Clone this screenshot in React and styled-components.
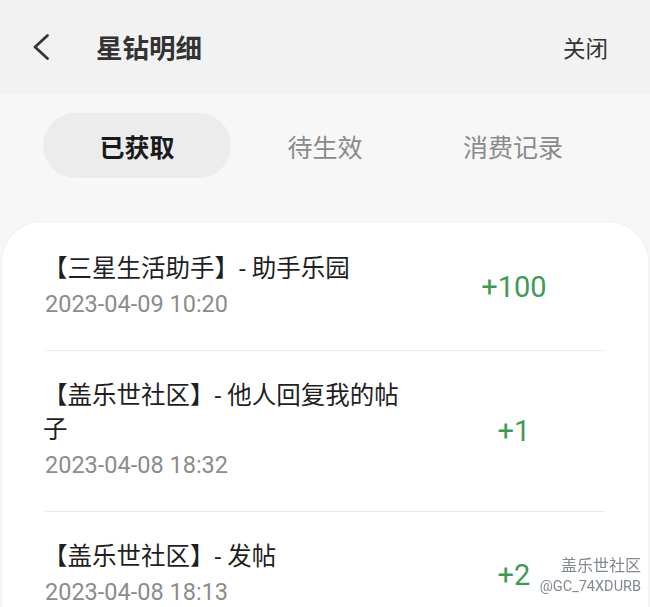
import React from 'react';
import styled, { createGlobalStyle } from 'styled-components';

const records = [
  { id: 1, title: '【三星生活助手】- 助手乐园', time: '2023-04-09 10:20', amount: '+100' },
  { id: 2, title: '【盖乐世社区】- 他人回复我的帖子', time: '2023-04-08 18:32', amount: '+1' },
  { id: 3, title: '【盖乐世社区】- 发帖', time: '2023-04-08 18:13', amount: '+2' },
];

const tabs = ['已获取', '待生效', '消费记录'];

const App = () => {
  return (
    <>
      <GlobalStyle />
      <Page>
        <Header>
          <Back aria-label="返回">
            <svg width="16" height="26" viewBox="0 0 16 26">
              <polyline
                points="14.5,1.5 2,13 14.5,24.5"
                fill="none"
                stroke="#333"
                strokeWidth="2.7"
                strokeLinecap="round"
                strokeLinejoin="round"
              />
            </svg>
          </Back>
          <Title>星钻明细</Title>
          <Close>关闭</Close>
        </Header>
        <Tabs>
          {tabs.map((t, i) => (
            <Tab key={t} active={i === 0}>
              {t}
            </Tab>
          ))}
        </Tabs>
        <Card>
          {records.map(item => (
            <Row key={item.id}>
              <Info>
                <RowTitle>{item.title}</RowTitle>
                <Time>{item.time}</Time>
              </Info>
              <Amount>{item.amount}</Amount>
            </Row>
          ))}
        </Card>
      </Page>
      <Watermark>
        <span>盖乐世社区</span>
        <small>@GC_74XDURB</small>
      </Watermark>
    </>
  );
};

export default App;

const GlobalStyle = createGlobalStyle`
  html, body {
    margin: 0;
    padding: 0;
    background: #f7f7f7;
    overflow: hidden;
  }
  body {
    font-family: Roboto, "Noto Sans CJK SC", sans-serif;
  }
`;

const Page = styled.div`
  min-height: 100vh;
  display: flex;
  flex-direction: column;
`;

const Header = styled.div`
  height: 95px;
  background: #f2f2f2;
  display: flex;
  align-items: center;
  padding: 0 42px 0 33px;
  box-sizing: border-box;
`;

const Back = styled.div`
  display: flex;
  width: 16px;
  height: 26px;
  margin-top: -1px;
`;

const Title = styled.h1`
  margin: 3px 0 0 47px;
  flex: 1;
  font-size: 26.5px;
  font-weight: 700;
  color: #333;
  line-height: 1;
`;

const Close = styled.span`
  font-size: 22.5px;
  font-weight: 400;
  color: #333;
  margin-top: -2px;
`;

const Tabs = styled.div`
  display: grid;
  grid-template-columns: repeat(3, 188px);
  margin: 18px 0 0 43px;
`;

const Tab = styled.div`
  height: 65px;
  border-radius: 33px;
  display: flex;
  align-items: center;
  justify-content: center;
  font-size: 25px;
  font-weight: ${p => (p.active ? 700 : 400)};
  color: ${p => (p.active ? '#1a1a1a' : '#8a8a8a')};
  background: ${p => (p.active ? '#ececec' : 'transparent')};
`;

const Card = styled.div`
  margin: 44px 2px 0;
  padding: 2px 43px 0;
  background: #fff;
  border-radius: 40px 40px 0 0;
  box-shadow: 0 0 0 1px #efefef;
  flex: 1;
`;

const Row = styled.div`
  display: flex;
  align-items: center;
  padding: 28px 0;
  border-bottom: 1px solid #ebebeb;
`;

const Info = styled.div`
  width: 368px;
  flex-shrink: 0;
`;

const RowTitle = styled.div`
  font-size: 24.5px;
  line-height: 34px;
  color: #1f1f1f;
  margin-left: -2px;
`;

const Time = styled.div`
  font-size: 23.5px;
  line-height: 36px;
  color: #8c8c8c;
`;

const Amount = styled.div`
  flex: 1;
  text-align: center;
  padding-left: 10px;
  font-size: 29px;
  color: #3f9a55;
`;

const Watermark = styled.div`
  position: fixed;
  right: 9px;
  bottom: 12px;
  display: flex;
  flex-direction: column;
  align-items: flex-end;
  color: #838991;
  text-shadow: 0 0 2px #fff;
  line-height: 1.2;
  span {
    font-size: 16px;
  }
  small {
    font-size: 14.5px;
    margin-top: 2px;
  }
`;
